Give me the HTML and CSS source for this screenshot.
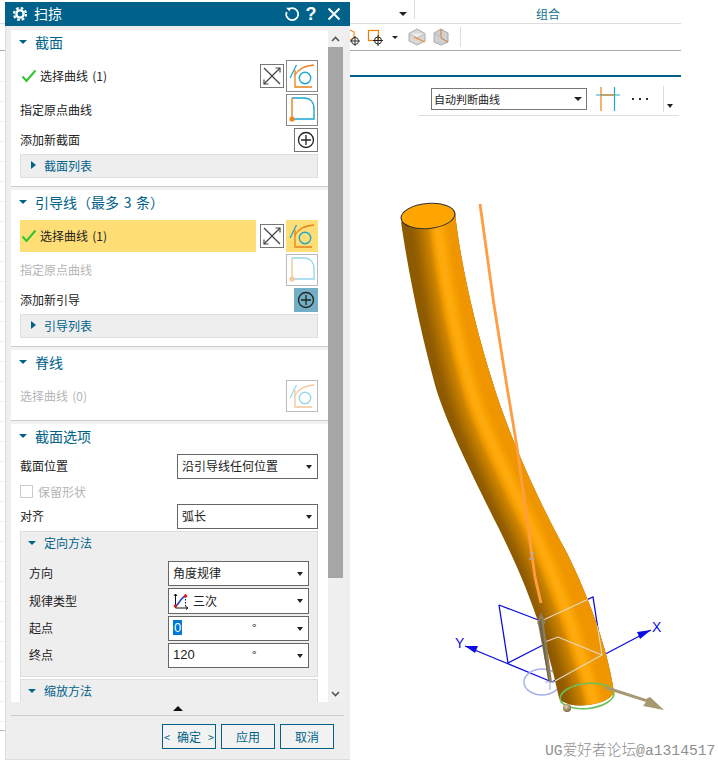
FILE: index.html
```html
<!DOCTYPE html>
<html lang="zh-CN">
<head>
    <meta charset="UTF-8">
    <meta name="viewport" content="width=device-width, initial-scale=1.0">
    <title>扫掠</title>
    <link rel="stylesheet" href="styles.css">
</head>
<body>
    <svg class="defs" width="0" height="0">
        <symbol id="ic-swap" viewBox="0 0 22 22">
            <path d="M3 3L19 19M19 3L3 19" fill="none" stroke="#444" stroke-width="1.2"/>
            <path d="M14.5 3h4.5v4.5M3 14.5v4.5h4.5" fill="none" stroke="#444" stroke-width="1.2"/>
        </symbol>
        <symbol id="ic-curve" viewBox="1 1 30 30">
            <path d="M4 18L10.5 5" fill="none" stroke="#19a7cf" stroke-width="1.3"/>
            <circle cx="19" cy="18" r="5.7" fill="none" stroke="#19a7cf" stroke-width="1.4"/>
            <path d="M9 10V27H26" fill="none" stroke="#e8801a" stroke-width="1.3"/>
            <path d="M9 15C13 8 20 5.5 28 5" fill="none" stroke="#e8801a" stroke-width="1.3"/>
        </symbol>
        <symbol id="ic-origin" viewBox="1 1 30 30">
            <path d="M6 25H28V15C28 8 24 4 18 4H6" fill="none" stroke="#19a7cf" stroke-width="1.4"/>
            <path d="M6 4V25" fill="none" stroke="#e8801a" stroke-width="1.4"/>
            <circle cx="6" cy="25" r="2.6" fill="#f0851a"/>
        </symbol>
        <symbol id="ic-plus" viewBox="1 1 22 22">
            <circle cx="12" cy="12" r="7.5" fill="none" stroke="#222" stroke-width="1.3"/>
            <path d="M12 7V17M7 12H17" stroke="#222" stroke-width="1.3"/>
        </symbol>
    </svg>

    <div class="app">
        <!-- ribbon behind the dialog -->
        <div class="ribbon-top">
            <div class="ribbon-left"><span class="caret"></span></div>
            <div class="ribbon-group">组合</div>
        </div>
        <div class="ribbon-tools">
            <svg class="tool-icons" width="120" height="27" viewBox="0 0 120 27">
                <path d="M10 6L14 8V14L10 16" fill="none" stroke="#ee8a20" stroke-width="1.2"/>
                <circle cx="15" cy="17" r="3.5" fill="none" stroke="#333"/>
                <path d="M15 12V22M10 17H20" stroke="#333"/>
                <rect x="28.5" y="6.5" width="10" height="10" fill="none" stroke="#ee8000" stroke-width="1.2"/>
                <circle cx="38" cy="16.5" r="3.5" fill="none" stroke="#222"/>
                <path d="M38 11V22M33 16.5H43" stroke="#222"/>
                <path d="M52 12H58L55 15Z" fill="#222"/>
                <path d="M77 5L85 9.5V17L77 21L69 17V9.5Z" fill="#d8d8d8" stroke="#aaa"/>
                <path d="M69 9.5L77 14L85 9.5" fill="#eee" stroke="#bbb"/>
                <path d="M74 13L85 18" stroke="#ee8a20" stroke-width="1.2"/>
                <path d="M101 5L108 9V18L101 21L94 18V9Z" fill="#d0d0d0" stroke="#aaa"/>
                <path d="M101 5V14L108 18" fill="none" stroke="#d0783a"/>
                <path d="M94 9L101 13" stroke="#bbb"/>
            </svg>
            <span class="tool-rule"></span>
        </div>
        <div class="lower">
            <div class="side-grid"></div>
            <div class="tool-area">
                <div class="tab-line"></div>
                <div class="tool-row">
                    <div class="curve-select">自动判断曲线<span class="caret"></span></div>
                    <svg class="snap-icon" width="24" height="24" viewBox="0 0 24 24">
                        <path d="M5 0V24" stroke="#e8801a" stroke-width="1.2"/>
                        <path d="M0 8H24M18.5 0V24" fill="none" stroke="#19a7cf" stroke-width="1.2"/>
                        <path d="M5 8H18.5" stroke="#e8801a" stroke-width="1.2"/>
                    </svg>
                    <div class="dots"><span></span><span></span><span></span></div>
                    <span class="tool-sep"></span>
                    <span class="caret tool-caret"></span>
                </div>
            </div>
        </div>

        <!-- model view -->
        <svg class="model" width="718" height="762" viewBox="0 0 718 762">
            <defs>
                <clipPath id="tube-clip">
                    <path d="M401,222 C408,270 420,330 435,385 C445,420 470,470 493,517 C515,560 543,620 559,698 A28,12 -6 0 0 614,692 C606,640 585,590 567,553 C535,495 507,430 492,380 C476,330 460,262 455,212 Z"/>
                </clipPath>
                <filter id="soft" filterUnits="userSpaceOnUse" x="370" y="180" width="280" height="550">
                    <feGaussianBlur stdDeviation="2"/>
                </filter>
                <radialGradient id="ball" cx="0.4" cy="0.35" r="0.7">
                    <stop offset="0" stop-color="#e8d8b0"/>
                    <stop offset="1" stop-color="#6e5c38"/>
                </radialGradient>
                <path id="tube-line" d="M428,190 C436,270 448,330 464,385 C474,420 498,470 521,517 C543,560 575,640 595,730" fill="none"/>
            </defs>

            <!-- csys under the tube -->
            <g fill="none" stroke="#0c0ce0" stroke-width="1.3">
                <path d="M499,605L508,663M499,605L541,621M508,663L545,644M465,646L552,682M552,682L651,630M541,621L593,597L602,655"/>
            </g>
            <path d="M465,646L478,646L475,653Z" fill="#0c0ce0"/>
            <path d="M651,630L637,632L640,639Z" fill="#0c0ce0"/>
            <text class="axis-label" x="455" y="648">Y</text>
            <text class="axis-label" x="652" y="632">X</text>
            <ellipse cx="542" cy="682" rx="18" ry="13" fill="none" stroke="#a8b0e8" stroke-width="1.5"/>
            <path d="M550,676V690M545,682H555" stroke="#a8b0e8" stroke-width="1.2"/>

            <!-- tube -->
            <g clip-path="url(#tube-clip)">
                <rect x="390" y="190" width="240" height="530" fill="#8e5a00"/>
                <g filter="url(#soft)" stroke-width="56">
                    <use href="#tube-line" transform="translate(9,0)" stroke="#9c6400"/>
                    <use href="#tube-line" transform="translate(14,0)" stroke="#b07100"/>
                    <use href="#tube-line" transform="translate(19,0)" stroke="#c67f00"/>
                    <use href="#tube-line" transform="translate(25,0)" stroke="#dc8c00"/>
                    <use href="#tube-line" transform="translate(31,0)" stroke="#ef9500"/>
                    <use href="#tube-line" transform="translate(6,0)" stroke="#f8a106" stroke-width="16"/>
                    <use href="#tube-line" transform="translate(6,0)" stroke="#ffab0c" stroke-width="7"/>
                </g>
                <path d="M541,621L593,597L602,655L555,681M542,643L558,637L602,655" fill="none" stroke="#e2dccb" stroke-width="1.1"/>
            </g>
            <ellipse cx="428" cy="216" rx="27" ry="12.5" transform="rotate(-5 428 216)" fill="#ffa500" stroke="#333" stroke-width="1.1"/>
            <ellipse cx="587" cy="696" rx="27" ry="12.5" transform="rotate(-6 587 696)" fill="none" stroke="#68c05a" stroke-width="1.6"/>

            <!-- guide line and handles -->
            <polyline points="480,204 494,305 507,387 517,447 535,577 541,603" fill="none" stroke="#ff9e40" stroke-width="2.8"/>
            <text class="tag" x="529" y="560">Z</text>
            <path d="M541,612L546,623L544,624L552,682L549,682L538,624L537,623Z" fill="#8d7d58"/>
            <path d="M541,618L539,623L548,680L549,680Z" fill="#6f6246"/>
            <path d="M606,686L646,699L650,697L664,710L643,706L646,702L605,689Z" fill="#a8986f"/>
            <circle cx="567" cy="708" r="4" fill="url(#ball)"/>
            <text class="watermark" x="545" y="755">UG爱好者论坛@a1314517</text>
        </svg>

        <!-- sweep dialog -->
        <div class="dialog">
            <div class="title-bar">
                <svg class="gear" width="16" height="16" viewBox="0 0 16 16">
                    <circle cx="8" cy="8" r="3.6" fill="none" stroke="#fff" stroke-width="2.4"/>
                    <circle cx="8" cy="8" r="6" fill="none" stroke="#fff" stroke-width="2.2" stroke-dasharray="2.7 2"/>
                </svg>
                <span class="title-text">扫掠</span>
                <svg class="title-btn reset" width="16" height="16" viewBox="0 0 16 16">
                    <path d="M5.5 2.8A6 6 0 1 1 2.6 6" fill="none" stroke="#fff" stroke-width="1.8"/>
                    <path d="M2 1.8L6.5 1.8L5.5 5.6Z" fill="#fff"/>
                </svg>
                <span class="title-help">?</span>
                <svg class="title-btn" width="14" height="14" viewBox="0 0 14 14">
                    <path d="M1.5 1.5L12.5 12.5M12.5 1.5L1.5 12.5" stroke="#fff" stroke-width="2"/>
                </svg>
            </div>

            <div class="panel">
                <div class="panel-content">
                    <section class="sec">
                        <div class="sec-head"><span class="tri-down"></span>截面</div>
                        <div class="sec-body">
                            <div class="row row-icon">
                                <div class="pick">
                                    <svg class="check" width="16" height="14" viewBox="0 0 16 14"><path d="M1.5 7.5L5.5 12L14.5 1.5" fill="none" stroke="#2fc52f" stroke-width="2"/></svg>
                                    选择曲线 (1)
                                </div>
                                <span class="btn-swap"><svg width="22" height="22"><use href="#ic-swap"/></svg></span>
                                <span class="btn-big"><svg width="30" height="30"><use href="#ic-curve"/></svg></span>
                            </div>
                            <div class="row row-icon">
                                <div class="row-label">指定原点曲线</div>
                                <span class="btn-big"><svg width="30" height="30"><use href="#ic-origin"/></svg></span>
                            </div>
                            <div class="row row-add">
                                <div class="row-label">添加新截面</div>
                                <span class="btn-add"><svg width="22" height="22"><use href="#ic-plus"/></svg></span>
                            </div>
                            <div class="list-row"><span class="tri-right"></span>截面列表</div>
                        </div>
                    </section>

                    <section class="sec">
                        <div class="sec-head"><span class="tri-down"></span>引导线（最多 3 条）</div>
                        <div class="sec-body">
                            <div class="row row-icon">
                                <div class="pick active">
                                    <svg class="check" width="16" height="14" viewBox="0 0 16 14"><path d="M1.5 7.5L5.5 12L14.5 1.5" fill="none" stroke="#2fc52f" stroke-width="2"/></svg>
                                    选择曲线 (1)
                                </div>
                                <span class="btn-swap"><svg width="22" height="22"><use href="#ic-swap"/></svg></span>
                                <span class="btn-big active"><svg width="30" height="30"><use href="#ic-curve"/></svg></span>
                            </div>
                            <div class="row row-icon off">
                                <div class="row-label">指定原点曲线</div>
                                <span class="btn-big"><svg width="30" height="30"><use href="#ic-origin"/></svg></span>
                            </div>
                            <div class="row row-add">
                                <div class="row-label">添加新引导</div>
                                <span class="btn-add hot"><svg width="22" height="22"><use href="#ic-plus"/></svg></span>
                            </div>
                            <div class="list-row"><span class="tri-right"></span>引导列表</div>
                        </div>
                    </section>

                    <section class="sec">
                        <div class="sec-head"><span class="tri-down"></span>脊线</div>
                        <div class="sec-body">
                            <div class="row row-icon off">
                                <div class="row-label">选择曲线 (0)</div>
                                <span class="btn-big"><svg width="30" height="30"><use href="#ic-curve"/></svg></span>
                            </div>
                        </div>
                    </section>

                    <section class="sec">
                        <div class="sec-head"><span class="tri-down"></span>截面选项</div>
                        <div class="sec-body">
                            <div class="row row-form">
                                <div class="row-label">截面位置</div>
                                <div class="combo">沿引导线任何位置<span class="caret"></span></div>
                            </div>
                            <div class="row row-check off">
                                <span class="checkbox"></span>保留形状
                            </div>
                            <div class="row row-form">
                                <div class="row-label">对齐</div>
                                <div class="combo">弧长<span class="caret"></span></div>
                            </div>
                            <div class="sub-group">
                                <div class="sub-head"><span class="tri-down"></span>定向方法</div>
                                <div class="sub-body">
                                    <div class="row row-form">
                                        <div class="row-label">方向</div>
                                        <div class="combo">角度规律<span class="caret"></span></div>
                                    </div>
                                    <div class="row row-form row-law">
                                        <div class="row-label">规律类型</div>
                                        <div class="combo">
                                            <svg class="law-icon" width="16" height="17" viewBox="0 0 16 17">
                                                <path d="M2.5 1V15H15M1 3L2.5 1L4 3M13 13.5L15 15L13 16.5" fill="none" stroke="#111"/>
                                                <path d="M12.5 3V15" stroke="#111" stroke-dasharray="1.5 1.5"/>
                                                <path d="M2.5 13C6 12 7 5 12.5 3" fill="none" stroke="#2440d8" stroke-width="1.6"/>
                                                <circle cx="2.5" cy="13" r="1.8" fill="#d92020"/>
                                                <circle cx="12.5" cy="3" r="1.8" fill="#d92020"/>
                                            </svg>
                                            三次<span class="caret"></span>
                                        </div>
                                    </div>
                                    <div class="row row-form">
                                        <div class="row-label">起点</div>
                                        <div class="combo num"><span class="num-value"><span class="selected">0</span></span><span class="deg">°</span><span class="caret"></span></div>
                                    </div>
                                    <div class="row row-form">
                                        <div class="row-label">终点</div>
                                        <div class="combo num"><span class="num-value">120</span><span class="deg">°</span><span class="caret"></span></div>
                                    </div>
                                </div>
                            </div>
                            <div class="sub-group">
                                <div class="sub-head"><span class="tri-down"></span>缩放方法</div>
                            </div>
                        </div>
                    </section>
                </div>
                <div class="scrollbar">
                    <div class="scroll-end"><svg width="9" height="6" viewBox="0 0 9 6"><path d="M1 5L4.5 1.5L8 5" fill="none" stroke="#555" stroke-width="1.6"/></svg></div>
                    <div class="scroll-thumb"></div>
                    <div class="scroll-end down"><svg width="9" height="6" viewBox="0 0 9 6"><path d="M1 1L4.5 4.5L8 1" fill="none" stroke="#555" stroke-width="1.6"/></svg></div>
                </div>
            </div>

            <div class="collapse-bar"><span class="tri-up"></span></div>
            <div class="dialog-buttons">
                <button class="dlg-btn ok"><span>&lt;</span>确定<span>&gt;</span></button>
                <button class="dlg-btn">应用</button>
                <button class="dlg-btn">取消</button>
            </div>
        </div>
    </div>
</body>
</html>
```

FILE: styles.css
```css
body {
    margin: 0;
    background-color: #fff;
    font-family: "Noto Sans CJK SC", "Liberation Sans", sans-serif;
    font-size: 12px;
    word-spacing: 1.5px;
    color: #222;
}

.defs {
    display: block;
    height: 0;
}

.app {
    position: relative;
    width: 718px;
    height: 762px;
    overflow: hidden;
}

.caret {
    display: inline-block;
    width: 0;
    height: 0;
    border-left: 4px solid transparent;
    border-right: 4px solid transparent;
    border-top: 4px solid #222;
}

/* ribbon */
.ribbon-top {
    display: flex;
    width: 681px;
    height: 23px;
    border-bottom: 1px solid #ddd;
}

.ribbon-left {
    width: 415px;
    border-right: 1px solid #ddd;
    height: 19px;
    display: flex;
    justify-content: flex-end;
    align-items: center;
    box-sizing: border-box;
    padding-right: 7px;
    padding-top: 8px;
}

.ribbon-group {
    flex: 1;
    text-align: center;
    line-height: 28px;
    color: #16708f;
}

.ribbon-tools {
    display: flex;
    align-items: center;
    width: 681px;
    height: 27px;
    padding-left: 340px;
    box-sizing: border-box;
    border-bottom: 1px solid #aaa;
}

.tool-rule {
    width: 1px;
    height: 20px;
    background-color: #ddd;
    flex-shrink: 0;
}

.lower {
    display: flex;
    margin-top: 24px;
}

.side-grid {
    width: 5px;
    height: 649px;
    margin-top: 6px;
    background: repeating-linear-gradient(to bottom, #f0f0f0 0, #f0f0f0 1px, #fff 1px, #fff 20px);
    border-bottom: 1px solid #bbb;
}

.tool-area {
    width: 341px;
    margin-left: 335px;
}

.tab-line {
    height: 2px;
    background-color: #00628a;
}

.tool-row {
    display: flex;
    align-items: center;
    margin: 9px 0 0 78px;
    width: 261px;
    height: 26px;
    padding-bottom: 3px;
    border-bottom: 1px solid #ddd;
}

.curve-select {
    display: flex;
    justify-content: space-between;
    align-items: center;
    box-sizing: border-box;
    width: 156px;
    height: 22px;
    margin-left: 13px;
    padding: 0 4px 0 2px;
    border: 1px solid #777;
    font-size: 11px;
}

.snap-icon {
    margin-left: 9px;
    flex-shrink: 0;
}

.dots {
    display: flex;
    gap: 5px;
    margin-left: 12px;
}

.dots span {
    width: 2px;
    height: 2px;
    background-color: #333;
}

.tool-sep {
    width: 1px;
    height: 26px;
    background-color: #ddd;
    margin-left: 15px;
}

.tool-caret {
    margin: 14px 0 0 3px;
    border-left-width: 3px;
    border-right-width: 3px;
}

/* model view */
.model {
    position: absolute;
    top: 0;
    left: 0;
}

.axis-label {
    font-family: "Liberation Sans", sans-serif;
    font-size: 14px;
    fill: #0c0ce0;
}

.tag {
    font-family: "Liberation Sans", sans-serif;
    font-size: 10px;
    fill: #aaa;
}

.watermark {
    font-family: "Liberation Mono", "Noto Sans CJK SC", monospace;
    font-size: 14.7px;
    font-weight: 300;
    word-spacing: 0;
    fill: #8f8f8f;
}

/* dialog */
.dialog {
    position: absolute;
    top: 2px;
    left: 5px;
    width: 345px;
    height: 758px;
    background-color: #eee;
    box-shadow: inset 1px 0 0 #ddd, inset 0 -1px 0 #ddd;
}

.title-bar {
    display: flex;
    align-items: center;
    height: 24px;
    background-color: #00628a;
    color: #fff;
    padding-left: 7px;
}

.title-text {
    flex: 1;
    margin-left: 6px;
    padding-bottom: 2px;
    font-size: 14px;
}

.title-btn {
    flex-shrink: 0;
}

.reset {
    margin-right: 4px;
}

.title-help {
    width: 14px;
    margin-right: 9px;
    text-align: center;
    font-family: "Liberation Sans", sans-serif;
    font-size: 18px;
    font-weight: bold;
}

.title-bar > .title-btn:last-child {
    margin-right: 9px;
}

.panel {
    display: flex;
    height: 672px;
    margin: 4px 7px 0 6px;
}

.panel-content {
    flex: 1;
    overflow: hidden;
    background-color: #f2f2f2;
}

.scrollbar {
    display: flex;
    flex-direction: column;
    width: 15px;
    background-color: #f0f0f0;
}

.scroll-end {
    height: 17px;
    display: flex;
    align-items: center;
    justify-content: center;
}

.scroll-end.down {
    margin-top: auto;
}

.scroll-thumb {
    height: 531px;
    background-color: #a6a6a6;
}

.sec {
    background-color: #fff;
    padding: 0 10px 8px 9px;
    border-bottom: 1px solid #ccc;
    margin-bottom: 3px;
}

.sec-head {
    display: flex;
    align-items: center;
    box-sizing: border-box;
    height: 26px;
    padding-bottom: 2px;
    font-size: 14px;
    color: #00628a;
    margin-left: -1px;
}

.tri-down {
    width: 0;
    height: 0;
    margin-right: 8px;
    border-left: 4px solid transparent;
    border-right: 4px solid transparent;
    border-top: 4px solid #00628a;
}

.tri-right {
    width: 0;
    height: 0;
    margin: 0 8px 0 10px;
    border-top: 4px solid transparent;
    border-bottom: 4px solid transparent;
    border-left: 5px solid #00628a;
}

.tri-up {
    width: 0;
    height: 0;
    border-left: 5px solid transparent;
    border-right: 5px solid transparent;
    border-bottom: 5px solid #111;
}

.sec-body {
    display: flex;
    flex-direction: column;
    gap: 2px;
    padding-top: 4px;
}

.row {
    display: flex;
    align-items: center;
}

.row-icon {
    height: 32px;
}

.row-add {
    height: 24px;
}

.row-form {
    height: 25px;
}

.row-law {
    height: 26px;
}

.row-check {
    box-sizing: border-box;
    height: 21px;
    padding-bottom: 1px;
}

.row-label {
    flex: 1;
    padding-bottom: 2px;
}

.pick {
    flex: 1;
    display: flex;
    align-items: center;
    box-sizing: border-box;
    height: 100%;
    padding: 0 0 2px 1px;
}

.pick.active {
    background-color: #ffde75;
}

.check {
    margin: 2px 3px 0 0;
}

.btn-swap {
    display: flex;
    align-items: center;
    justify-content: center;
    box-sizing: border-box;
    width: 24px;
    height: 24px;
    margin: 0 2px 0 4px;
    border: 1px solid #777;
}

.btn-big {
    display: flex;
    box-sizing: border-box;
    width: 32px;
    height: 32px;
    border: 1px solid #888;
}

.btn-big.active {
    border-color: #ffde75;
    background-color: #ffde75;
}

.btn-add {
    display: flex;
    box-sizing: border-box;
    width: 24px;
    height: 24px;
    border: 1px solid #777;
}

.btn-add.hot {
    border-color: #72afc6;
    background-color: #72afc6;
}

.off {
    color: #b5b5b5;
}

.off .btn-big {
    border-color: #bbb;
}

.off svg {
    opacity: 0.45;
}

.list-row {
    display: flex;
    align-items: center;
    box-sizing: border-box;
    height: 24px;
    padding-bottom: 2px;
    background-color: #eee;
    border: 1px solid #ddd;
    color: #00628a;
}

.combo {
    display: flex;
    align-items: center;
    box-sizing: border-box;
    width: 141px;
    height: 100%;
    padding: 0 5px 2px 4px;
    background-color: #fff;
    border: 1px solid #666;
    color: #222;
}

.combo .caret {
    margin: 2px 0 0 auto;
    border-left-width: 3.5px;
    border-right-width: 3.5px;
}

.law-icon {
    margin: 2px 4px 0 0;
}

.num-value {
    width: 79px;
    font-family: "Liberation Sans", sans-serif;
    font-size: 13px;
}

.selected {
    background-color: #0078d7;
    color: #fff;
    padding: 0 1px;
}

.deg {
    font-size: 12px;
}

.checkbox {
    box-sizing: border-box;
    width: 13px;
    height: 13px;
    margin-right: 5px;
    border: 1px solid #ccc;
}

.sub-group {
    background-color: #eee;
    border: 1px solid #ddd;
}

.sub-head {
    display: flex;
    align-items: center;
    box-sizing: border-box;
    height: 23px;
    padding: 0 0 2px 7px;
    color: #00628a;
}

.sub-body {
    display: flex;
    flex-direction: column;
    gap: 2px;
    padding: 6px 8px 8px;
}

.collapse-bar {
    display: flex;
    justify-content: center;
    align-items: center;
    height: 13px;
    margin: 0 6px;
    border-bottom: 1px solid #ccc;
}

.dialog-buttons {
    display: flex;
    justify-content: flex-end;
    gap: 5px;
    margin-top: 8px;
    padding-right: 16px;
}

.dlg-btn {
    display: flex;
    align-items: center;
    justify-content: center;
    box-sizing: border-box;
    width: 54px;
    height: 25px;
    padding: 0;
    background-color: #f2f2f2;
    border: 1px solid #00628a;
    font-family: inherit;
    font-size: 12px;
    color: #00628a;
}

.ok {
    gap: 7px;
}

.ok span {
    font-size: 11px;
}
```
